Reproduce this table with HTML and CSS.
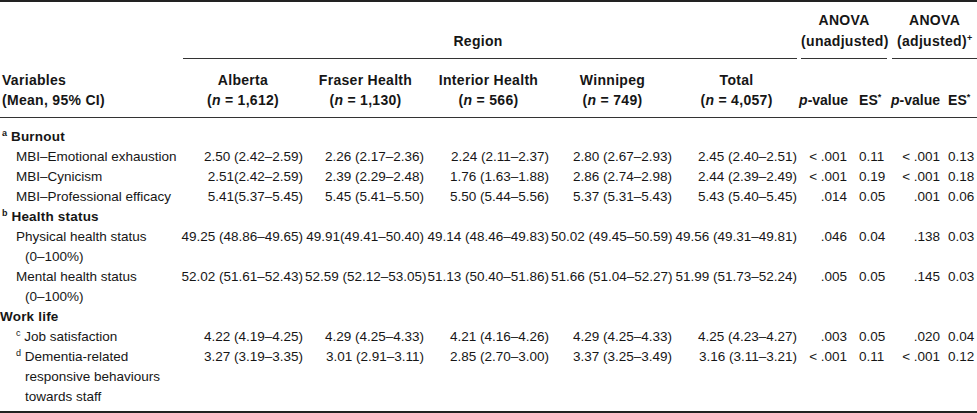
FILE: index.html
```html
<!DOCTYPE html>
<html lang="en">
<head>
<meta charset="utf-8">
<title>Table</title>
<link rel="stylesheet" href="styles.css">
</head>
<body>
<table class="t">
  <colgroup>
    <col class="c-var"><col class="c-alb"><col class="c-fra"><col class="c-int"><col class="c-win"><col class="c-tot">
    <col class="c-p1"><col class="c-e1"><col class="c-p2"><col class="c-e2">
  </colgroup>
  <thead>
    <tr class="h1">
      <th></th>
      <th colspan="5"><div class="rule rule-region">Region</div></th>
      <th colspan="2"><div class="rule rule-u">ANOVA<br>(unadjusted)</div></th>
      <th colspan="2"><div class="rule rule-a">ANOVA<br>(adjusted)<sup>+</sup></div></th>
    </tr>
    <tr class="h2">
      <th class="var">Variables<br>(Mean, 95% CI)</th>
      <th class="reg">Alberta<br>(<i>n</i> = 1,612)</th>
      <th class="reg">Fraser Health<br>(<i>n</i> = 1,130)</th>
      <th class="reg">Interior Health<br>(<i>n</i> = 566)</th>
      <th class="reg">Winnipeg<br>(<i>n</i> = 749)</th>
      <th class="reg">Total<br>(<i>n</i> = 4,057)</th>
      <th class="p"><i>p</i>-value</th>
      <th class="es">ES<sup>*</sup></th>
      <th class="p"><i>p</i>-value</th>
      <th class="es es2">ES<sup>*</sup></th>
    </tr>
  </thead>
  <tbody>
    <tr class="sec first"><td colspan="10"><sup>a</sup> Burnout</td></tr>
    <tr>
      <td class="lbl">MBI–Emotional exhaustion</td>
      <td class="num">2.50 (2.42–2.59)</td><td class="num">2.26 (2.17–2.36)</td><td class="num">2.24 (2.11–2.37)</td><td class="num">2.80 (2.67–2.93)</td><td class="num">2.45 (2.40–2.51)</td>
      <td class="p">&lt; .001</td><td class="es">0.11</td><td class="p">&lt; .001</td><td class="es es2">0.13</td>
    </tr>
    <tr>
      <td class="lbl">MBI–Cynicism</td>
      <td class="num">2.51(2.42–2.59)</td><td class="num">2.39 (2.29–2.48)</td><td class="num">1.76 (1.63–1.88)</td><td class="num">2.86 (2.74–2.98)</td><td class="num">2.44 (2.39–2.49)</td>
      <td class="p">&lt; .001</td><td class="es">0.19</td><td class="p">&lt; .001</td><td class="es es2">0.18</td>
    </tr>
    <tr>
      <td class="lbl">MBI–Professional efficacy</td>
      <td class="num">5.41(5.37–5.45)</td><td class="num">5.45 (5.41–5.50)</td><td class="num">5.50 (5.44–5.56)</td><td class="num">5.37 (5.31–5.43)</td><td class="num">5.43 (5.40–5.45)</td>
      <td class="p">.014</td><td class="es">0.05</td><td class="p">.001</td><td class="es es2">0.06</td>
    </tr>
    <tr class="sec"><td colspan="10"><sup>b</sup> Health status</td></tr>
    <tr>
      <td class="lbl">Physical health status<br>(0–100%)</td>
      <td class="num">49.25 (48.86–49.65)</td><td class="num">49.91(49.41–50.40)</td><td class="num">49.14 (48.46–49.83)</td><td class="num">50.02 (49.45–50.59)</td><td class="num">49.56 (49.31–49.81)</td>
      <td class="p">.046</td><td class="es">0.04</td><td class="p">.138</td><td class="es es2">0.03</td>
    </tr>
    <tr>
      <td class="lbl">Mental health status<br>(0–100%)</td>
      <td class="num">52.02 (51.61–52.43)</td><td class="num">52.59 (52.12–53.05)</td><td class="num">51.13 (50.40–51.86)</td><td class="num">51.66 (51.04–52.27)</td><td class="num">51.99 (51.73–52.24)</td>
      <td class="p">.005</td><td class="es">0.05</td><td class="p">.145</td><td class="es es2">0.03</td>
    </tr>
    <tr class="sec"><td colspan="10" class="plain">Work life</td></tr>
    <tr>
      <td class="lbl"><sup>c</sup> Job satisfaction</td>
      <td class="num">4.22 (4.19–4.25)</td><td class="num">4.29 (4.25–4.33)</td><td class="num">4.21 (4.16–4.26)</td><td class="num">4.29 (4.25–4.33)</td><td class="num">4.25 (4.23–4.27)</td>
      <td class="p">.003</td><td class="es">0.05</td><td class="p">.020</td><td class="es es2">0.04</td>
    </tr>
    <tr class="last">
      <td class="lbl"><sup>d</sup> Dementia-related<br>responsive behaviours<br>towards staff</td>
      <td class="num">3.27 (3.19–3.35)</td><td class="num">3.01 (2.91–3.11)</td><td class="num">2.85 (2.70–3.00)</td><td class="num">3.37 (3.25–3.49)</td><td class="num">3.16 (3.11–3.21)</td>
      <td class="p">&lt; .001</td><td class="es">0.11</td><td class="p">&lt; .001</td><td class="es es2">0.12</td>
    </tr>
  </tbody>
</table>
</body>
</html>
```
FILE: styles.css
```css
html, body {
  margin: 0;
  padding: 0;
  background: #ffffff;
}

body {
  font-family: "Liberation Sans", Arial, sans-serif;
  font-size: 13.5px;
  color: #161616;
}

.t {
  border-collapse: collapse;
  table-layout: fixed;
  width: 977px;
  border-top: 2px solid #222;
  border-bottom: 2px solid #222;
}

.c-var { width: 181px; }
.c-alb { width: 124px; }
.c-fra { width: 121px; }
.c-int { width: 125px; }
.c-win { width: 123px; }
.c-tot { width: 125px; }
.c-p1 { width: 50px; }
.c-e1 { width: 40px; }
.c-p2 { width: 53px; }
.c-e2 { width: 35px; }

th, td {
  padding: 0;
  line-height: 20px;
  white-space: nowrap;
  vertical-align: top;
}

th {
  font-weight: 700;
  font-size: 14px;
  letter-spacing: 0.3px;
  vertical-align: bottom;
}

sup {
  font-size: 9px;
  line-height: 0;
  vertical-align: 5px;
  letter-spacing: 0;
}

i {
  font-style: italic;
}

/* header row 1 */
.h1 th {
  padding-top: 8px;
  line-height: 21px;
  text-align: center;
}

.rule {
  border-bottom: 1px solid #333;
  padding-bottom: 6px;
}

.rule-region {
  margin: 0 2px;
  padding-right: 24px;
}

.rule-u {
  margin: 0 2px;
}

.rule-a {
  margin-left: 3px;
}

/* header row 2 */
.h2 th {
  padding-top: 11px;
  padding-bottom: 7px;
  border-bottom: 1px solid #333;
}

.h2 .var {
  text-align: left;
  padding-left: 2px;
}

.h2 .reg {
  text-align: center;
}

.p {
  text-align: right;
  padding-right: 2px;
}

.es {
  text-align: left;
  padding-left: 10px;
}

.es2 {
  padding-left: 6px;
}

.h2 .p {
  letter-spacing: 0;
}

.h2 .es {
  letter-spacing: 0;
}

/* body */
.sec td {
  font-weight: 700;
  letter-spacing: 0.2px;
  padding-left: 2px;
}

.sec td.plain {
  padding-left: 0;
}

.first td {
  padding-top: 9px;
}

.last td {
  padding-bottom: 4px;
}

.lbl {
  white-space: normal;
  padding-left: 25px;
  text-indent: -9px;
}

.num {
  text-align: right;
  padding-right: 2px;
}
```
